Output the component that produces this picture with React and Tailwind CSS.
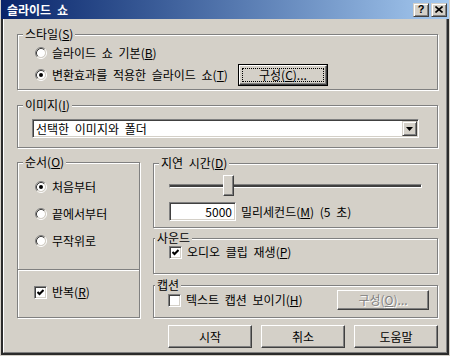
import React from 'react';

const FACE = 'bg-[#d4d0c8]';
const RAISED = 'border border-t-white border-l-white border-r-[#404040] border-b-[#404040] shadow-[inset_-1px_-1px_0_#808080] bg-[#d4d0c8]';
const SUNKEN = 'border border-t-[#808080] border-l-[#808080] border-r-white border-b-white shadow-[inset_1px_1px_0_#404040,inset_-1px_-1px_0_#d4d0c8] bg-white';
const ETCHED = 'relative border border-[#808080] shadow-[inset_1px_1px_0_#fff,1px_1px_0_#fff]';

const Radio = ({ checked }) => (
  <svg width="12" height="12" viewBox="0 0 12 12" className="shrink-0">
    <circle cx="6" cy="6" r="4" fill="#fff" />
    <path d="M2.11 9.89A5.5 5.5 0 0 1 9.89 2.11" fill="none" stroke="#808080" />
    <path d="M9.89 2.11A5.5 5.5 0 0 1 2.11 9.89" fill="none" stroke="#fff" />
    <path d="M2.82 9.18A4.5 4.5 0 0 1 9.18 2.82" fill="none" stroke="#404040" />
    <path d="M9.18 2.82A4.5 4.5 0 0 1 2.82 9.18" fill="none" stroke="#d4d0c8" />
    {checked && <circle cx="6" cy="6" r="2" fill="#000" />}
  </svg>
);

const Check = ({ checked }) => (
  <span className={`w-[13px] h-[13px] shrink-0 flex items-center justify-center ${SUNKEN}`}>
    {checked && (
      <svg width="7" height="7" viewBox="0 0 7 7">
        <polyline points="0.5,3 2.5,5 6.5,1" fill="none" stroke="#000" strokeWidth="2" />
      </svg>
    )}
  </span>
);

const Group = ({ label, labelLeft = 'left-[5px]', className = '', children }) => (
  <div className={`${ETCHED} ${className}`}>
    <span className={`absolute -top-[8px] ${labelLeft} px-[2px] ${FACE} leading-[14px]`}>{label}</span>
    {children}
  </div>
);

const Button = ({ children, className = '' }) => (
  <div className={`h-[23px] w-[84px] flex items-center justify-center ${RAISED} ${className}`}>
    {children}
  </div>
);

export default function App() {
  return (
    <div className="w-[450px] h-[356px] bg-[#d4d0c8] px-[1px] pb-[1px] flex flex-col text-[12px] leading-[14px] text-black [word-spacing:3px] font-['Noto_Sans_CJK_KR',sans-serif]">
      {/* title bar */}
      <div className="h-[19px] shrink-0 bg-linear-to-r from-[#0a246a] to-[#a6caf0] flex items-center pl-[6px] pr-[2px]">
        <span className="text-white font-bold text-[12px] flex-1">슬라이드 쇼</span>
        <div className="flex gap-[2px]">
          <div className="w-[16px] h-[14px] flex items-center justify-center border border-t-[#d4d0c8] border-l-[#d4d0c8] border-r-[#404040] border-b-[#404040] shadow-[inset_1px_1px_0_#fff,inset_-1px_-1px_0_#808080] bg-[#d4d0c8] text-[11px] font-bold leading-none font-['Liberation_Sans',sans-serif]">
            ?
          </div>
          <div className="w-[16px] h-[14px] flex items-center justify-center border border-t-[#d4d0c8] border-l-[#d4d0c8] border-r-[#404040] border-b-[#404040] shadow-[inset_1px_1px_0_#fff,inset_-1px_-1px_0_#808080] bg-[#d4d0c8]">
            <svg width="8" height="7" viewBox="0 0 8 7">
              <path d="M0.5 0.5L7.5 6.5M7.5 0.5L0.5 6.5" stroke="#000" strokeWidth="1.6" />
            </svg>
          </div>
        </div>
      </div>

      {/* body */}
      <div className="flex-1 border-x-2 border-b-2 border-[#2b2b2b]">
        <div className="h-full border-l border-l-white border-r border-r-[#808080] border-b border-b-[#808080] pt-[15px] pl-[13px] pr-[8px] flex flex-col">
          <Group label={<>스타일(<u>S</u>)</>} className="h-[56px]">
            <div className="flex flex-col pt-[10px] pl-[17px]">
              <div className="h-[16px] flex items-center gap-[5px]">
                <Radio />
                <span>슬라이드 쇼 기본(<u>B</u>)</span>
              </div>
              <div className="mt-[3px] h-[22px] flex items-center">
                <Radio checked />
                <span className="ml-[5px]">변환효과를 적용한 슬라이드 쇼(<u>T</u>)</span>
                <div className="ml-[10px] w-[90px] h-[22px] border border-black">
                  <div className={`h-full w-full p-[2px] ${RAISED}`}>
                    <div className="h-full w-full border border-dotted border-black flex items-center justify-center">
                      구성(<u>C</u>)...
                    </div>
                  </div>
                </div>
              </div>
            </div>
          </Group>

          <Group label={<>이미지(<u>I</u>)</>} className="mt-[15px] h-[43px]">
            <div className="pt-[13px] pl-[14px]">
              <div className={`h-[19px] w-[387px] flex items-center pl-[3px] pr-[1px] ${SUNKEN}`}>
                <span className="flex-1">선택한 이미지와 폴더</span>
                <div className="w-[15px] h-[15px] flex items-center justify-center border border-t-[#d4d0c8] border-l-[#d4d0c8] border-r-[#404040] border-b-[#404040] shadow-[inset_1px_1px_0_#fff,inset_-1px_-1px_0_#808080] bg-[#d4d0c8]">
                  <svg width="7" height="4" viewBox="0 0 7 4">
                    <path d="M0 0H7L3.5 4Z" fill="#000" />
                  </svg>
                </div>
              </div>
            </div>
          </Group>

          <div className="mt-[14px] flex gap-[13px]">
            <Group label={<>순서(<u>O</u>)</>} className="w-[123px] h-[156px] shrink-0">
              <div className="flex flex-col gap-[11px] pt-[16px] pl-[17px]">
                <div className="h-[16px] flex items-center gap-[5px]">
                  <Radio checked />
                  <span>처음부터</span>
                </div>
                <div className="h-[16px] flex items-center gap-[5px]">
                  <Radio />
                  <span>끝에서부터</span>
                </div>
                <div className="h-[16px] flex items-center gap-[5px]">
                  <Radio />
                  <span>무작위로</span>
                </div>
              </div>
              <div className="mt-[20px] h-[2px] border-t border-t-[#808080] border-b border-b-white" />
              <div className="mt-[13px] pl-[16px] h-[16px] flex items-center gap-[5px]">
                <Check checked />
                <span>반복(<u>R</u>)</span>
              </div>
            </Group>

            <div className="flex-1 mt-[1px] flex flex-col">
              <Group label={<>지연 시간(<u>D</u>)</>} className="h-[65px]">
                <div className="pt-[11px] px-[15px]">
                  <div className="relative h-[21px] pt-[9px]">
                    <div className="h-[4px] border-t border-t-[#808080] border-l border-l-[#808080] border-b border-b-white border-r border-r-white bg-[#404040]" />
                    <div className={`absolute top-0 left-[54px] w-[11px] h-[21px] ${RAISED}`} />
                  </div>
                  <div className="mt-[6px] flex items-center">
                    <div className={`w-[67px] h-[19px] flex items-center justify-end pr-[3px] ${SUNKEN}`}>5000</div>
                    <span className="ml-[5px]">밀리세컨드(<u>M</u>) (5 초)</span>
                  </div>
                </div>
              </Group>

              <Group label="사운드" labelLeft="left-[1px]" className="mt-[10px] h-[36px]">
                <div className="pt-[5px] pl-[15px] h-[21px] flex items-center gap-[5px]">
                  <Check checked />
                  <span>오디오 클립 재생(<u>P</u>)</span>
                </div>
              </Group>

              <Group label="캡션" labelLeft="left-[1px]" className="mt-[11px] h-[33px]">
                <div className="pt-[4px] pl-[14px] pr-[8px] flex items-center justify-between">
                  <div className="flex items-center gap-[5px]">
                    <Check />
                    <span>텍스트 캡션 보이기(<u>H</u>)</span>
                  </div>
                  <div className={`w-[92px] h-[20px] flex items-center justify-center text-[#808080] [text-shadow:1px_1px_0_#fff] ${RAISED}`}>
                    구성(<u>O</u>)...
                  </div>
                </div>
              </Group>
            </div>
          </div>

          <div className="mt-[7px] flex justify-end gap-[9px]">
            <Button>시작</Button>
            <Button>취소</Button>
            <Button>도움말</Button>
          </div>
        </div>
      </div>
    </div>
  );
}
